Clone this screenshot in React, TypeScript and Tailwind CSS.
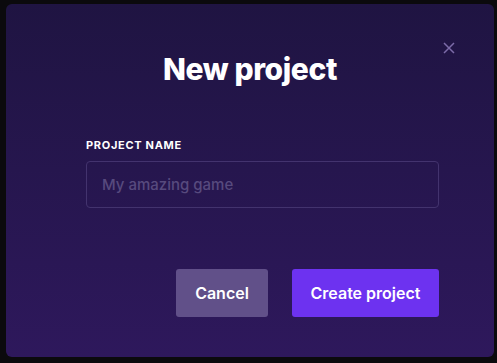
import React from "react";

const App = () => {
  return (
    <div className="w-[497px] h-[363px] bg-[#0b0a0d] overflow-hidden font-[Inter,sans-serif]">
      <div className="relative ml-[6px] mt-[4px] w-[488px] h-[353px] rounded-md bg-gradient-to-b from-[#1f1442] to-[#2e185c] pt-[46px] pl-[80px] pr-[55px] flex flex-col">
        {/* close */}
        <button className="absolute top-[38px] left-[437px] w-3 h-3 text-[#7c6ba8]">
          <svg viewBox="0 0 12 12" width="12" height="12" fill="none" stroke="currentColor" strokeWidth="1.5">
            <path d="M1 1 L11 11 M11 1 L1 11" />
          </svg>
        </button>

        <h2 className="-ml-[80px] -mr-[55px] text-center text-[30px] leading-[38px] font-extrabold tracking-[-0.4px] text-white">
          New project
        </h2>

        <label className="mt-[49px] text-[11px] leading-4 font-bold tracking-[0.7px] uppercase text-white">
          Project name
        </label>
        <input
          className="mt-2 h-[47px] w-[353px] rounded-[4px] border border-[#43336e] bg-transparent px-[15px] text-[15px] font-medium text-white placeholder:text-[#574a7e] outline-none"
          placeholder="My amazing game"
        />

        <div className="mt-[61px] flex justify-end gap-6">
          <button className="h-12 w-[92px] rounded-[3px] bg-[#615089] text-base font-semibold text-white">
            Cancel
          </button>
          <button className="h-12 w-[147px] rounded-[3px] bg-[#6d32f0] text-base font-semibold text-white">
            Create project
          </button>
        </div>
      </div>
    </div>
  );
};

export default App;
